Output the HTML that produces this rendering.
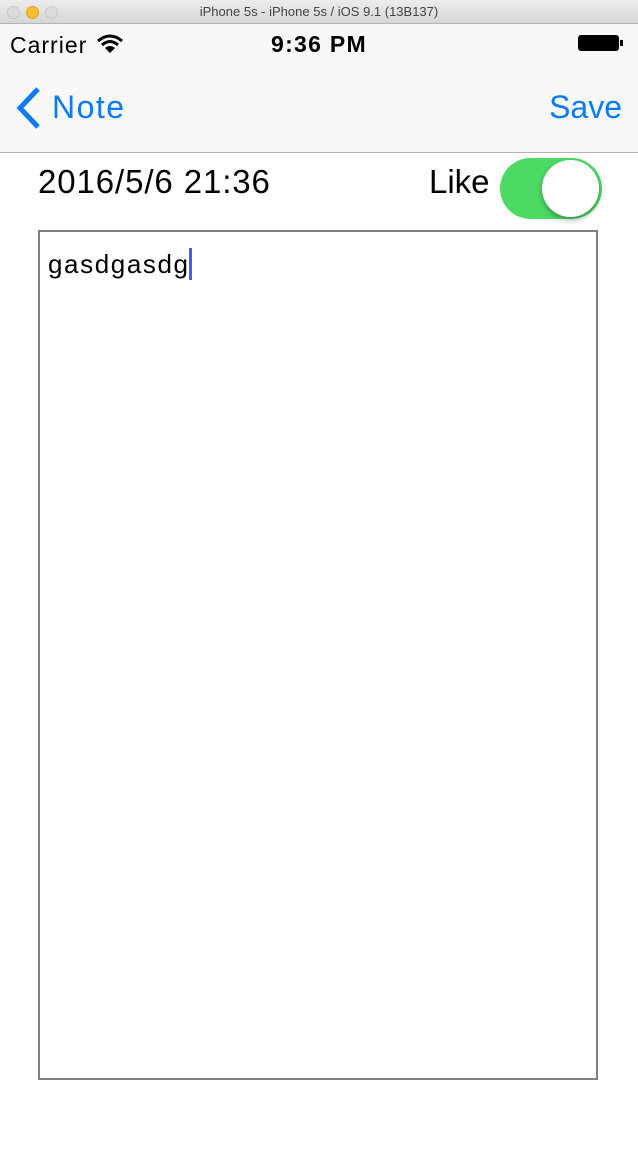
<!DOCTYPE html><html><head><style>
body{margin:0;width:638px;height:1158px;background:#fff;position:relative;font-family:"Liberation Sans",sans-serif;overflow:hidden}
.a{position:absolute}
</style></head><body>
<div class="a" style="left:0;top:0;width:638px;height:23px;background:linear-gradient(#ececec,#d6d6d6);border-bottom:1px solid #b5b5b5"></div>
<div class="a" style="left:7px;top:6px;width:11px;height:11px;border-radius:50%;background:#dcdcdc;border:1px solid #c8c8c8"></div>
<div class="a" style="left:26px;top:6px;width:11px;height:11px;border-radius:50%;background:#fdbc2e;border:1px solid #e0a020"></div>
<div class="a" style="left:45px;top:6px;width:11px;height:11px;border-radius:50%;background:#dcdcdc;border:1px solid #c8c8c8"></div>
<div class="a" style="left:0;top:4px;width:638px;text-align:center;font-size:13px;color:#444">iPhone 5s - iPhone 5s / iOS 9.1 (13B137)</div>
<div class="a" style="left:0;top:24px;width:638px;height:128px;background:#f8f8f8;border-bottom:1px solid #b2b2b2"></div>
<div class="a" style="left:10px;top:32px;font-size:23px;color:#000;letter-spacing:1px">Carrier</div>
<svg class="a" style="left:97px;top:34px" width="26" height="20" viewBox="0 0 26 20"><path d="M1 7 Q13 -3 25 7" stroke="#000" stroke-width="3" fill="none"/><path d="M5 11 Q13 4 21 11" stroke="#000" stroke-width="3" fill="none"/><path d="M13 19 L8 14 Q13 10 18 14 Z" fill="#000"/></svg>
<div class="a" style="left:0;top:31px;width:638px;text-align:center;font-size:23px;font-weight:bold;color:#000;letter-spacing:1.3px">9:36 PM</div>
<div class="a" style="left:578px;top:35px;width:41px;height:16px;border:1.5px solid #000;border-radius:3px;background:#000;box-sizing:border-box"></div>
<div class="a" style="left:620px;top:40px;width:3px;height:6px;background:#000"></div>
<svg class="a" style="left:12px;top:86px" width="30" height="44"><path d="M26 3 L8 22 L26 41" stroke="#0a7aff" stroke-width="5" fill="none"/></svg>
<div class="a" style="left:52px;top:89px;font-size:32px;color:#0a7aff;letter-spacing:1.5px">Note</div>
<div class="a" style="right:16px;top:89px;font-size:32px;color:#0a7aff">Save</div>
<div class="a" style="left:38px;top:163px;font-size:33px;color:#000;letter-spacing:0.9px">2016/5/6 21:36</div>
<div class="a" style="left:429px;top:163px;font-size:33px;color:#000">Like</div>
<div class="a" style="left:500px;top:158px;width:102px;height:61px;border-radius:31px;background:#4cd964"></div>
<div class="a" style="left:542px;top:160px;width:57px;height:57px;border-radius:50%;background:#fff;box-shadow:0 3px 6px rgba(0,0,0,.3)"></div>
<div class="a" style="left:38px;top:230px;width:560px;height:850px;border:2px solid #808080;box-sizing:border-box"></div>
<div class="a" style="left:48px;top:249px;font-size:26px;color:#000;letter-spacing:1.6px">gasdgasdg</div>
<div class="a" style="left:189px;top:248px;width:3px;height:32px;background:#3d64f0"></div>
</body></html>
